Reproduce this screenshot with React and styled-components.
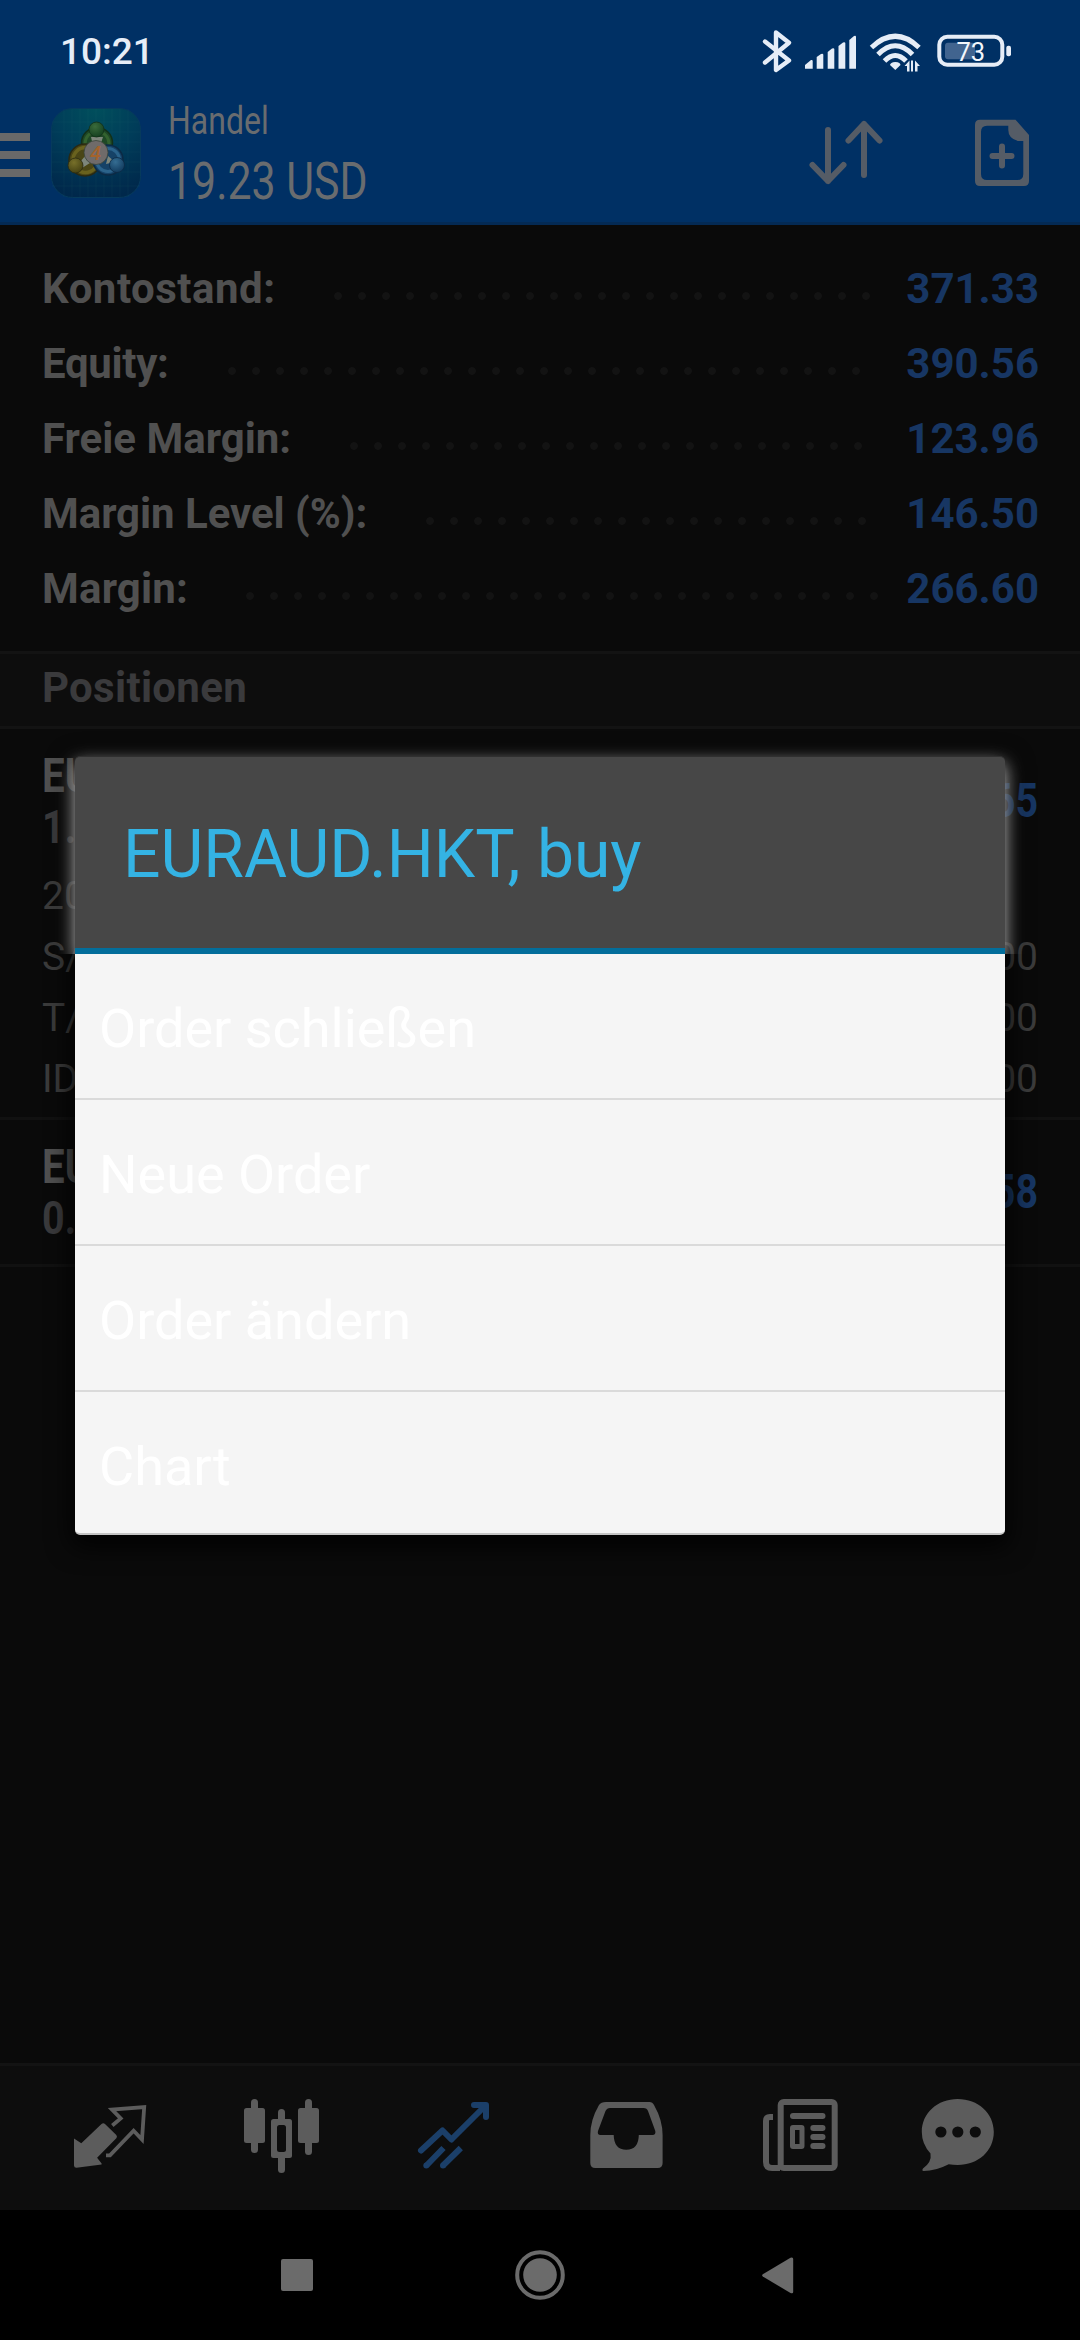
import React from "react";
import styled, { createGlobalStyle } from "styled-components";

const GlobalStyle = createGlobalStyle`
  * { box-sizing: border-box; }
  html, body { margin: 0; padding: 0; background: #000; }
  body { font-family: Roboto, "Noto Sans", sans-serif; }
  svg { display: block; flex: none; }
`;

const Screen = styled.div`
  position: relative;
  width: 1080px;
  height: 2340px;
  display: flex;
  flex-direction: column;
  overflow: hidden;
  background: #0a0a0a;
`;

const TopArea = styled.div`
  height: 225px;
  display: flex;
  flex-direction: column;
  background: #003064;
  border-bottom: 3px solid #042a54;
`;

const StatusBar = styled.div`
  height: 100px;
  display: flex;
  align-items: center;
  justify-content: space-between;
  padding: 4px 60px 0 60px;
`;

const Clock = styled.span`
  font-size: 37px;
  font-weight: 500;
  line-height: 44px;
  color: #e6edf7;
`;

const AppBar = styled.div`
  height: 122px;
  display: flex;
  align-items: flex-start;
`;

const MenuBars = styled.div`
  width: 30px;
  margin-top: 33px;
  display: flex;
  flex-direction: column;
  gap: 10px;
  span { height: 8px; background: #696969; }
`;

const LogoBox = styled.div`
  margin: 8px 0 0 21px;
`;

const Titles = styled.div`
  flex: 1;
  margin-left: 27px;
  display: flex;
  flex-direction: column;
`;

const Title = styled.span`
  font-size: ${(p) => p.$size}px;
  line-height: ${(p) => p.$line}px;
  color: #696c6f;
  white-space: nowrap;
  transform: scaleX(${(p) => p.$squeeze});
  transform-origin: left;
`;

const Actions = styled.div`
  display: flex;
  gap: 84px;
  padding: 16px 47px 0 0;
`;

const Summary = styled.section`
  display: flex;
  flex-direction: column;
  padding: 26px 41px 25px 42px;
`;

const SummaryRow = styled.div`
  height: 75px;
  display: flex;
  align-items: center;
  font-size: 42px;
  line-height: 75px;
  font-weight: 700;
`;

const SummaryLabel = styled.span`
  width: ${(p) => p.$width}px;
  letter-spacing: ${(p) => p.$track}px;
  color: #505050;
  white-space: nowrap;
`;

const Leader = styled.i`
  width: ${(p) => p.$count * 24}px;
  height: 8px;
  margin-top: 15px;
  background: radial-gradient(circle at 4px 4px, #131313 3.4px, transparent 4.2px) 0 0 / 24px 8px repeat-x;
`;

const Amount = styled.span`
  margin-left: auto;
  color: #173663;
`;

const SectionTitle = styled.div`
  height: 78px;
  padding: 0 42px 5px;
  border-top: 3px solid #131313;
  border-bottom: 3px solid #131313;
  background: #0d0d0d;
  color: #3a3a3c;
  font-size: 42px;
  line-height: 67px;
  font-weight: 700;
  letter-spacing: 0.3px;
`;

const Position = styled.div`
  padding: 21px 42px ${(p) => p.$bottom}px 42px;
  border-bottom: 3px solid #111;
`;

const PositionHead = styled.div`
  display: flex;
  align-items: center;
  justify-content: space-between;
  font-size: 48px;
  font-weight: 700;
  line-height: 51px;
`;

const Symbol = styled.div`
  display: flex;
  flex-direction: column;
  color: #505050;
  transform: scaleX(0.84);
  transform-origin: left;
  em { font-style: normal; color: #173663; }
  small { font-size: 47px; color: #3a3a3c; }
`;

const Profit = styled.span`
  margin-bottom: 2px;
  color: #173663;
  transform: scaleX(0.82);
  transform-origin: right;
`;

const Details = styled.div`
  margin-top: 14px;
`;

const Detail = styled.div`
  display: flex;
  justify-content: space-between;
  font-size: 39px;
  line-height: 61px;
  color: #3b3b3b;
  font-weight: 400;
`;

const TabBar = styled.nav`
  height: 147px;
  margin-top: auto;
  display: grid;
  grid-template-columns: repeat(4, 172px) 160px 80px;
  align-items: start;
  padding: 32px 0 0 70px;
  border-top: 3px solid #131313;
  background: #0d0d0d;
`;

const SystemNav = styled.nav`
  height: 130px;
  display: grid;
  grid-template-columns: 233px 248px 32px;
  align-items: center;
  padding-left: 281px;
  background: #000;
`;

const Dialog = styled.div`
  position: absolute;
  left: 75px;
  top: 756px;
  width: 930px;
  border-radius: 5px;
  box-shadow: 0 8px 24px 4px rgba(0, 0, 0, 0.85);
`;

const DialogHead = styled.div`
  height: 198px;
  clip-path: inset(-40px -40px 0 -40px);
`;

const DialogTitle = styled.div`
  height: 198px;
  padding: 3px 0 0 48px;
  border-top: 1px solid #303030;
  border-bottom: 6px solid #036e9b;
  border-radius: 5px 5px 0 0;
  background: #474747;
  box-shadow: 0 7px 18px rgba(255, 255, 255, 0.75);
  color: #34b3e4;
  font-size: 66px;
  line-height: 190px;
`;

const Menu = styled.div`
  height: 581px;
  border-radius: 0 0 5px 5px;
  background: #f5f5f5;
  border-bottom: 2px solid #c4c4c4;
`;

const MenuItem = styled.div`
  height: 146px;
  padding: 5px 0 0 24px;
  border-bottom: 2px solid #dadada;
  color: #fff;
  font-size: 54px;
  line-height: 140px;
  &:last-child { border-bottom: 0; height: 141px; }
`;

const Icon = ({ x, y, w, h, children, ...rest }) => (
  <svg width={w} height={h} viewBox={`${x} ${y} ${w} ${h}`} fill="none" {...rest}>
    {children}
  </svg>
);

const StatusIcons = () => (
  <Icon x={760} y={24} w={260} h={56} stroke="#e6edf7">
    <path d="M765 41.5 789 60.5 776 70V32.500L789 42.700 765 62.500" strokeWidth="4.4" strokeLinejoin="round" strokeLinecap="round" />
    <g fill="#e6edf7" stroke="none">
      <path d="M805 68.700V65L811 60Q812.700 59.500 812.700 61V68.700Z" />
      <path d="M816.700 68.700V57L821 54Q823.300 53 823.300 55V68.700Z" />
      <path d="M827.700 68.700V52L832 48.500Q834.300 47.500 834.300 49.500V68.700Z" />
      <path d="M838.500 68.700V46L843 42.500Q845.300 41.500 845.300 43.500V68.700Z" />
      <path d="M849.300 68.700V40L854 36Q856 35 856 37V68.700Z" />
      <path d="M895.300 62C899 62 900.500 63.500 900.500 65L895.300 70 890 65C890 63.500 892 62 895.300 62Z" />
      <path d="M904.500 66 909.500 60.500V71.500H907V66ZM911 60.500H913V71.500H911ZM915 71.500V60.500L920 66H917.500V71.500Z" />
      <rect x="1006.300" y="45.700" width="4.700" height="10.600" rx="2" />
      <rect x="945" y="42.700" width="30" height="16.600" rx="3" fill="#41648f" />
    </g>
    <g strokeWidth="5">
      <path d="M871.500 47.500Q895.300 25 919 47.500" />
      <path d="M878 54.500Q895.300 37 912.500 54.500" />
      <path d="M884.500 61Q895.300 50 906 61" />
    </g>
    <rect x="939.300" y="36.700" width="63" height="28" rx="8" strokeWidth="4" />
    <text x="970.800" y="61" fill="#f2f6fb" stroke="none" fontFamily="Roboto, sans-serif" fontSize="25.500" fontWeight="400" textAnchor="middle">73</text>
  </Icon>
);

const Logo = () => (
  <Icon x={51} y={108} w={90} h={90}>
    <defs>
      <radialGradient id="tile" cx="0.5" cy="0" r="1">
        <stop offset="0" stopColor="#004f5c" />
        <stop offset="0.5" stopColor="#003c59" />
        <stop offset="1" stopColor="#00284b" />
      </radialGradient>
      <radialGradient id="green" cx="0.4" cy="0.3" r="0.8">
        <stop offset="0" stopColor="#3b6b3b" />
        <stop offset="1" stopColor="#0f3b1c" />
      </radialGradient>
      <radialGradient id="gold" cx="0.4" cy="0.3" r="0.8">
        <stop offset="0" stopColor="#77702a" />
        <stop offset="1" stopColor="#3f3c10" />
      </radialGradient>
      <radialGradient id="azure" cx="0.4" cy="0.3" r="0.8">
        <stop offset="0" stopColor="#356d92" />
        <stop offset="1" stopColor="#0d3558" />
      </radialGradient>
    </defs>
    <rect x="51.500" y="108.500" width="89" height="89" rx="21" fill="url(#tile)" stroke="#063a5c" />
    <path d="M64 109V197M72 109V197M80 109V197M88 109V197M96 109V197M104 109V197M112 109V197M120 109V197M128 109V197M52 122H140M52 132H140M52 142H140M52 152H140M52 162H140M52 172H140M52 186H140" stroke="#3c7a88" strokeOpacity="0.08" />
    <circle cx="97" cy="143" r="15.500" fill="#1f4826" stroke="#123018" strokeWidth="1.500" />
    <circle cx="97" cy="143.500" r="12" stroke="#33622f" strokeWidth="3" />
    <circle cx="85" cy="160" r="16" fill="#4a4616" stroke="#2a2a12" strokeWidth="1.500" />
    <circle cx="85.500" cy="160" r="12.500" stroke="#69621e" strokeWidth="3.500" />
    <circle cx="108" cy="160" r="15" fill="#164267" stroke="#0b2a45" strokeWidth="1.500" />
    <circle cx="108" cy="160" r="11.500" stroke="#2b638b" strokeWidth="3" />
    <path d="M91 137 103 137 100 146H93ZM80 162 86 155 90 163 82 168ZM106 164 108 156 115 162Z" fill="#7d867b" />
    <circle cx="96.500" cy="129.500" r="7.500" fill="url(#green)" stroke="#123018" strokeWidth="0.800" />
    <circle cx="75.500" cy="165.500" r="7.500" fill="url(#gold)" stroke="#2a2a12" strokeWidth="0.800" />
    <circle cx="117" cy="165" r="7.500" fill="url(#azure)" stroke="#0b2a45" strokeWidth="0.800" />
    <circle cx="96" cy="152.500" r="12" fill="#6f6b6a" stroke="#39443a" strokeWidth="0.800" />
    <text x="95.500" y="159.500" textAnchor="middle" fontFamily="Roboto, sans-serif" fontSize="20" fontStyle="italic" fontWeight="500" fill="#a4632c">4</text>
  </Icon>
);

const SortIcon = () => (
  <Icon x={806} y={116} w={80} h={74} stroke="#555c66" strokeWidth="6" strokeLinecap="round" strokeLinejoin="round">
    <path d="M828 130V181M812.500 165 828 181 843.500 165M864 175V124M848.500 140.500 864 124 879.500 140.500" />
  </Icon>
);

const NewOrderIcon = () => (
  <Icon x={970} y={116} w={63} h={74} fill="#555c66">
    <path fillRule="evenodd" d="M980 119.700H1015.500L1029 135V181Q1029 186 1024 186H980Q975 186 975 181V124.700Q975 119.700 980 119.700ZM987 125.700Q981 125.700 981 131.700V174Q981 180 987 180H1017.300Q1023.300 180 1023.300 174V141H1018Q1008.300 138.500 1008.300 130V125.700Z" />
    <path d="M992.500 156H1011.500M1002 146.500V165.500" stroke="#555c66" strokeWidth="6" strokeLinecap="round" />
  </Icon>
);

const TabIcons = () => (
  <>
    <Icon x={70} y={2098} w={80} h={80}>
      <path d="M74 2138.500 81.300 2143.300 101.500 2124Q103.300 2122.300 105 2124L116.300 2135Q117.700 2136.700 116.300 2138.300L97.100 2157.700 101.600 2163.500V2164.500L76.500 2167.700Q74 2167.700 74 2165.500Z" fill="#5c5c5c" />
      <path d="M112.300 2125.500 120.700 2118.400 112 2109.500 144.200 2107 142 2139.500 133.600 2130.800 110 2155.300H106" stroke="#5c5c5c" strokeWidth="3.800" />
    </Icon>
    <Icon x={242} y={2098} w={80} h={80} fill="#5c5c5c">
      <rect x="251" y="2099" width="7" height="54" rx="3.500" />
      <rect x="244" y="2108" width="21" height="35" rx="2.500" />
      <rect x="305" y="2099" width="7" height="56" rx="3.500" />
      <rect x="298" y="2108" width="21" height="35" rx="2.500" />
      <rect x="278" y="2109" width="7" height="64" rx="3.500" />
      <rect x="271" y="2119" width="21" height="39" rx="2.500" />
      <rect x="277" y="2125" width="9" height="27" rx="2.500" fill="#0d0d0d" />
    </Icon>
    <Icon x={414} y={2098} w={80} h={80} stroke="#1b3f69" strokeWidth="6">
      <path d="M421 2150.500 442.500 2130.500 451.400 2139.500 485 2106M474 2105H486V2117" strokeLinecap="round" strokeLinejoin="round" />
      <path d="M426.500 2165.500 443.500 2148M443 2165.500 460.800 2148" />
      <g fill="#1b3f69" stroke="none">
        <circle cx="426.300" cy="2165.500" r="3" />
        <circle cx="443" cy="2165.500" r="3" />
      </g>
    </Icon>
    <Icon x={586} y={2098} w={80} h={80} fill="#5c5c5c">
      <path fillRule="evenodd" d="M606 2102H649.500Q652.500 2102 654 2105Q662.600 2120 662.600 2135V2163Q662.600 2168 657.600 2168H595.300Q590.300 2168 590.300 2163V2135Q590.300 2120 599 2105Q601 2102 606 2102ZM610 2108Q607 2108 605.500 2111L598 2131Q597 2135 600.500 2135H613.700Q614 2149.700 626.300 2149.700T638.800 2135H652.500Q656 2135 655.300 2131L648 2111Q647 2108 643.500 2108Z" />
    </Icon>
    <Icon x={758} y={2098} w={84} h={80} stroke="#5c5c5c" strokeWidth="6">
      <rect x="780.700" y="2102" width="54" height="66" rx="3" />
      <path d="M773 2117H770Q766 2117 766 2121V2162Q766 2168 772 2168H780" />
      <path d="M793 2116H822.500M813.300 2128H822.500M813.300 2137H822.500M813.300 2146H822.500" strokeLinecap="round" />
      <rect x="792.500" y="2127.500" width="9.500" height="19" rx="0.500" strokeWidth="5" />
    </Icon>
    <Icon x={918} y={2098} w={80} h={80} fill="#5c5c5c">
      <path fillRule="evenodd" d="M957.700 2099C978 2099 993.800 2113 993.800 2132S978 2165 957.700 2165Q953 2165 948.700 2164.300Q936 2171 923.500 2171Q921.500 2170.500 923 2168.500Q932 2162 930.500 2153.500Q921.800 2144 921.800 2132C921.800 2113 937.500 2099 957.700 2099ZM935.300 2132A5.600 5.600 0 1 0 946.500 2132A5.600 5.600 0 1 0 935.300 2132ZM952.200 2132A5.600 5.600 0 1 0 963.400 2132A5.600 5.600 0 1 0 952.200 2132ZM969.700 2132A5.600 5.600 0 1 0 980.900 2132A5.600 5.600 0 1 0 969.700 2132Z" />
    </Icon>
  </>
);

const summary = [
  { label: "Kontostand:", amount: "371.33", start: 292, dots: 23, track: 0.5 },
  { label: "Equity:", amount: "390.56", start: 186, dots: 27, track: -0.3 },
  { label: "Freie Margin:", amount: "123.96", start: 308, dots: 22, track: 0 },
  { label: "Margin Level (%):", amount: "146.50", start: 384, dots: 19, track: -0.05 },
  { label: "Margin:", amount: "266.60", start: 204, dots: 27, track: 0.2 },
];

const details = [
  ["20", ""],
  ["S/", "00"],
  ["T/", "00"],
  ["ID", "00"],
];

const actions = ["Order schließen", "Neue Order", "Order ändern", "Chart"];

export default function App() {
  return (
    <Screen>
      <GlobalStyle />
      <TopArea>
        <StatusBar>
          <Clock>10:21</Clock>
          <StatusIcons />
        </StatusBar>
        <AppBar>
          <MenuBars><span /><span /><span /></MenuBars>
          <LogoBox><Logo /></LogoBox>
          <Titles>
            <Title $size={39.5} $line={41} $squeeze={0.81}>Handel</Title>
            <Title $size={51} $line={82} $squeeze={0.84}>19.23 USD</Title>
          </Titles>
          <Actions>
            <SortIcon />
            <NewOrderIcon />
          </Actions>
        </AppBar>
      </TopArea>

      <Summary>
        {summary.map((r) => (
          <SummaryRow key={r.label}>
            <SummaryLabel $width={r.start} $track={r.track}>{r.label}</SummaryLabel>
            <Leader $count={r.dots} />
            <Amount>{r.amount}</Amount>
          </SummaryRow>
        ))}
      </Summary>

      <SectionTitle>Positionen</SectionTitle>

      <Position $bottom={7}>
        <PositionHead>
          <Symbol>
            <span>EURAUD.HKT, <em>buy</em></span>
            <small>1.</small>
          </Symbol>
          <Profit>.65</Profit>
        </PositionHead>
        <Details>
          {details.map(([name, value]) => (
            <Detail key={name}><span>{name}</span><span>{value}</span></Detail>
          ))}
        </Details>
      </Position>
      <Position $bottom={21}>
        <PositionHead>
          <Symbol>
            <span>EU</span>
            <small>0.</small>
          </Symbol>
          <Profit>.58</Profit>
        </PositionHead>
      </Position>

      <TabBar><TabIcons /></TabBar>

      <SystemNav>
        <Icon x={281} y={2259} w={32} h={32}>
          <rect x="281" y="2259" width="32" height="32" rx="2" fill="#6b6b6b" />
        </Icon>
        <Icon x={514} y={2249} w={52} h={52}>
          <circle cx="540" cy="2275" r="22.800" stroke="#6b6b6b" strokeWidth="4" />
          <circle cx="540" cy="2275" r="16.800" fill="#6b6b6b" />
        </Icon>
        <Icon x={762} y={2256} w={32} h={38}>
          <path d="M762.800 2274.300 790.500 2257.700Q793.200 2256.700 793.200 2259V2292Q793.200 2294 790.500 2293L762.800 2276.500Q761.500 2275.500 762.800 2274.300Z" fill="#6b6b6b" />
        </Icon>
      </SystemNav>

      <Dialog>
        <DialogHead>
          <DialogTitle>EURAUD.HKT, buy</DialogTitle>
        </DialogHead>
        <Menu>
          {actions.map((a) => (
            <MenuItem key={a}>{a}</MenuItem>
          ))}
        </Menu>
      </Dialog>
    </Screen>
  );
}
